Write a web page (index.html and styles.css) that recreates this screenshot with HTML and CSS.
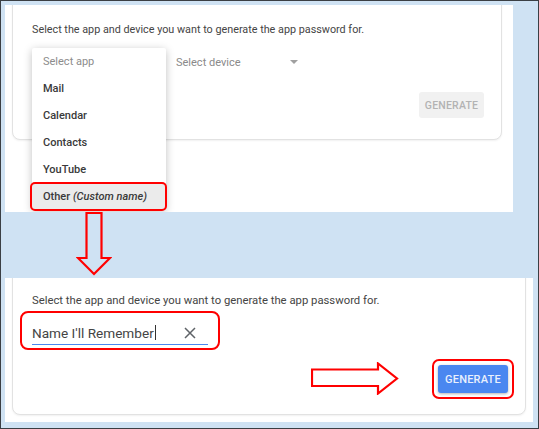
FILE: index.html
```html
<!DOCTYPE html>
<html lang="en">
<head>
<meta charset="utf-8">
<title>App passwords</title>
<link rel="stylesheet" href="styles.css">
</head>
<body>
<div class="frame">
  <section class="shot shot-top">
    <div class="card card-top">
      <p class="lead">Select the app and device you want to generate the app password for.</p>
      <div class="selects">
        <div class="select select-app">Select app</div>
        <div class="select select-device"><span>Select device</span><span class="tri"></span></div>
      </div>
      <div class="actions"><button class="btn btn-disabled" type="button">GENERATE</button></div>
    </div>
    <ul class="menu">
      <li class="menu-item placeholder">Select app</li>
      <li class="menu-item">Mail</li>
      <li class="menu-item">Calendar</li>
      <li class="menu-item">Contacts</li>
      <li class="menu-item">YouTube</li>
      <li class="menu-item active">Other <em>(Custom name)</em></li>
    </ul>
    <div class="mark mark-other"></div>
  </section>

  <div class="gap">
    <svg class="down-arrow" width="36" height="64" viewBox="0 0 36 64">
      <polygon points="10.5,1 25.5,1 25.5,46 34,46 18,62 2,46 10.5,46" fill="#cfe2f3" stroke="#ff0000" stroke-width="2.2"/>
    </svg>
  </div>

  <section class="shot shot-bottom">
    <div class="card card-bottom">
      <p class="lead lead-lg">Select the app and device you want to generate the app password for.</p>
      <div class="field">
        <span class="value">Name I'll Remember</span><span class="caret"></span>
        <svg class="clear" width="12" height="12" viewBox="0 0 12 12"><path d="M1 1L11 11M11 1L1 11" stroke="#5f6368" stroke-width="1.5" fill="none"/></svg>
      </div>
      <div class="actions"><button class="btn btn-primary" type="button">GENERATE</button></div>
    </div>
    <div class="mark mark-field"></div>
    <div class="mark mark-btn"></div>
    <svg class="right-arrow" width="88" height="33" viewBox="0 0 88 33">
      <polygon points="1,7.5 67,7.5 67,1.5 86,16.5 67,31.5 67,24 1,24" fill="#ffffff" stroke="#ff0000" stroke-width="2.2"/>
    </svg>
  </section>
</div>
</body>
</html>
```
FILE: styles.css
```css
* { box-sizing: border-box; }
html, body { margin: 0; padding: 0; }
body {
  font-family: Roboto, "Liberation Sans", sans-serif;
  background: #cfe2f3;
}
.frame {
  width: 539px;
  height: 429px;
  border: 1px solid #3b3f44;
  background: #cfe2f3;
  padding: 4px 0 0 4px;
  display: flex;
  flex-direction: column;
}
.shot {
  position: relative;
  overflow: hidden;
  background: #ffffff;
}
.shot-top { width: 508px; height: 207px; }
.shot-bottom { width: 528px; height: 144px; }

.card {
  margin-left: 7px;
  margin-top: -20px;
  border: 1px solid #e2e2e2;
  border-radius: 8px;
  box-shadow: 0 1px 2px rgba(0,0,0,0.06);
  background: #fff;
}
.card-top { width: 490px; height: 155px; padding: 36px 17px 0 19px; }
.card-bottom { width: 514px; height: 157px; padding: 34px 17px 0 19px; }

.lead {
  margin: 0;
  font-size: 10.8px;
  line-height: 16px;
  color: #444444;
  white-space: nowrap;
}
.lead-lg { font-size: 11.3px; }

.selects {
  display: flex;
  align-items: center;
  height: 20px;
  margin-top: 14px;
  font-size: 11px;
  color: #8a8a8a;
}
.select-app { width: 144px; padding-left: 11px; }
.select-device {
  display: flex;
  align-items: center;
  width: 122px;
  justify-content: space-between;
}
.tri {
  width: 0; height: 0;
  border-left: 4px solid transparent;
  border-right: 4px solid transparent;
  border-top: 4px solid #a0a0a0;
}

.actions {
  display: flex;
  justify-content: flex-end;
  margin-top: 20px;
}
.btn {
  border: 0;
  font-family: Roboto, "Liberation Sans", sans-serif;
  font-weight: 500;
  letter-spacing: 0.2px;
  border-radius: 3px;
  padding: 0;
}
.btn-disabled {
  width: 65px; height: 26px;
  background: #f1f1f1;
  color: #b3b3b3;
  font-size: 10.5px;
}
.btn-primary {
  width: 70px; height: 28px;
  background: #4a87f0;
  color: #e9f0fd;
  font-size: 11px;
  box-shadow: 0 1px 3px rgba(0,0,0,0.3);
}

.menu {
  position: absolute;
  left: 27px;
  top: 43px;
  width: 134px;
  margin: 0;
  padding: 0;
  list-style: none;
  background: #fff;
  box-shadow: 0 2px 8px rgba(0,0,0,0.25);
  border-radius: 2px;
}
.menu-item {
  height: 27px;
  line-height: 27px;
  padding-left: 11px;
  font-size: 11px;
  font-weight: 500;
  color: #3a3a3a;
}
.menu-item.placeholder { font-weight: 400; color: #8c8c8c; }
.menu-item.active { background: #ebebeb; }
.menu-item em { font-style: italic; }

.mark {
  position: absolute;
  border: 2px solid #ff0000;
}
.mark-other { left: 25px; top: 177px; width: 137px; height: 29px; border-radius: 5px; }
.mark-field { left: 15px; top: 33px; width: 200px; height: 39px; border-radius: 8px; }
.mark-btn { left: 427px; top: 81px; width: 82px; height: 40px; border-radius: 7px; }

.gap {
  height: 66px;
  flex: none;
  padding-left: 71px;
}
.down-arrow { display: block; }

.field {
  display: flex;
  align-items: center;
  width: 176px;
  height: 24px;
  margin-top: 12px;
  border-bottom: 1.5px solid #4a87f0;
  font-size: 13.6px;
  color: #444;
}
.value { white-space: nowrap; }
.caret {
  width: 1px;
  height: 15px;
  background: #333;
  margin-left: 1px;
}
.clear { margin-left: auto; margin-right: 12px; }

.right-arrow {
  position: absolute;
  left: 306px;
  top: 84px;
}
```
